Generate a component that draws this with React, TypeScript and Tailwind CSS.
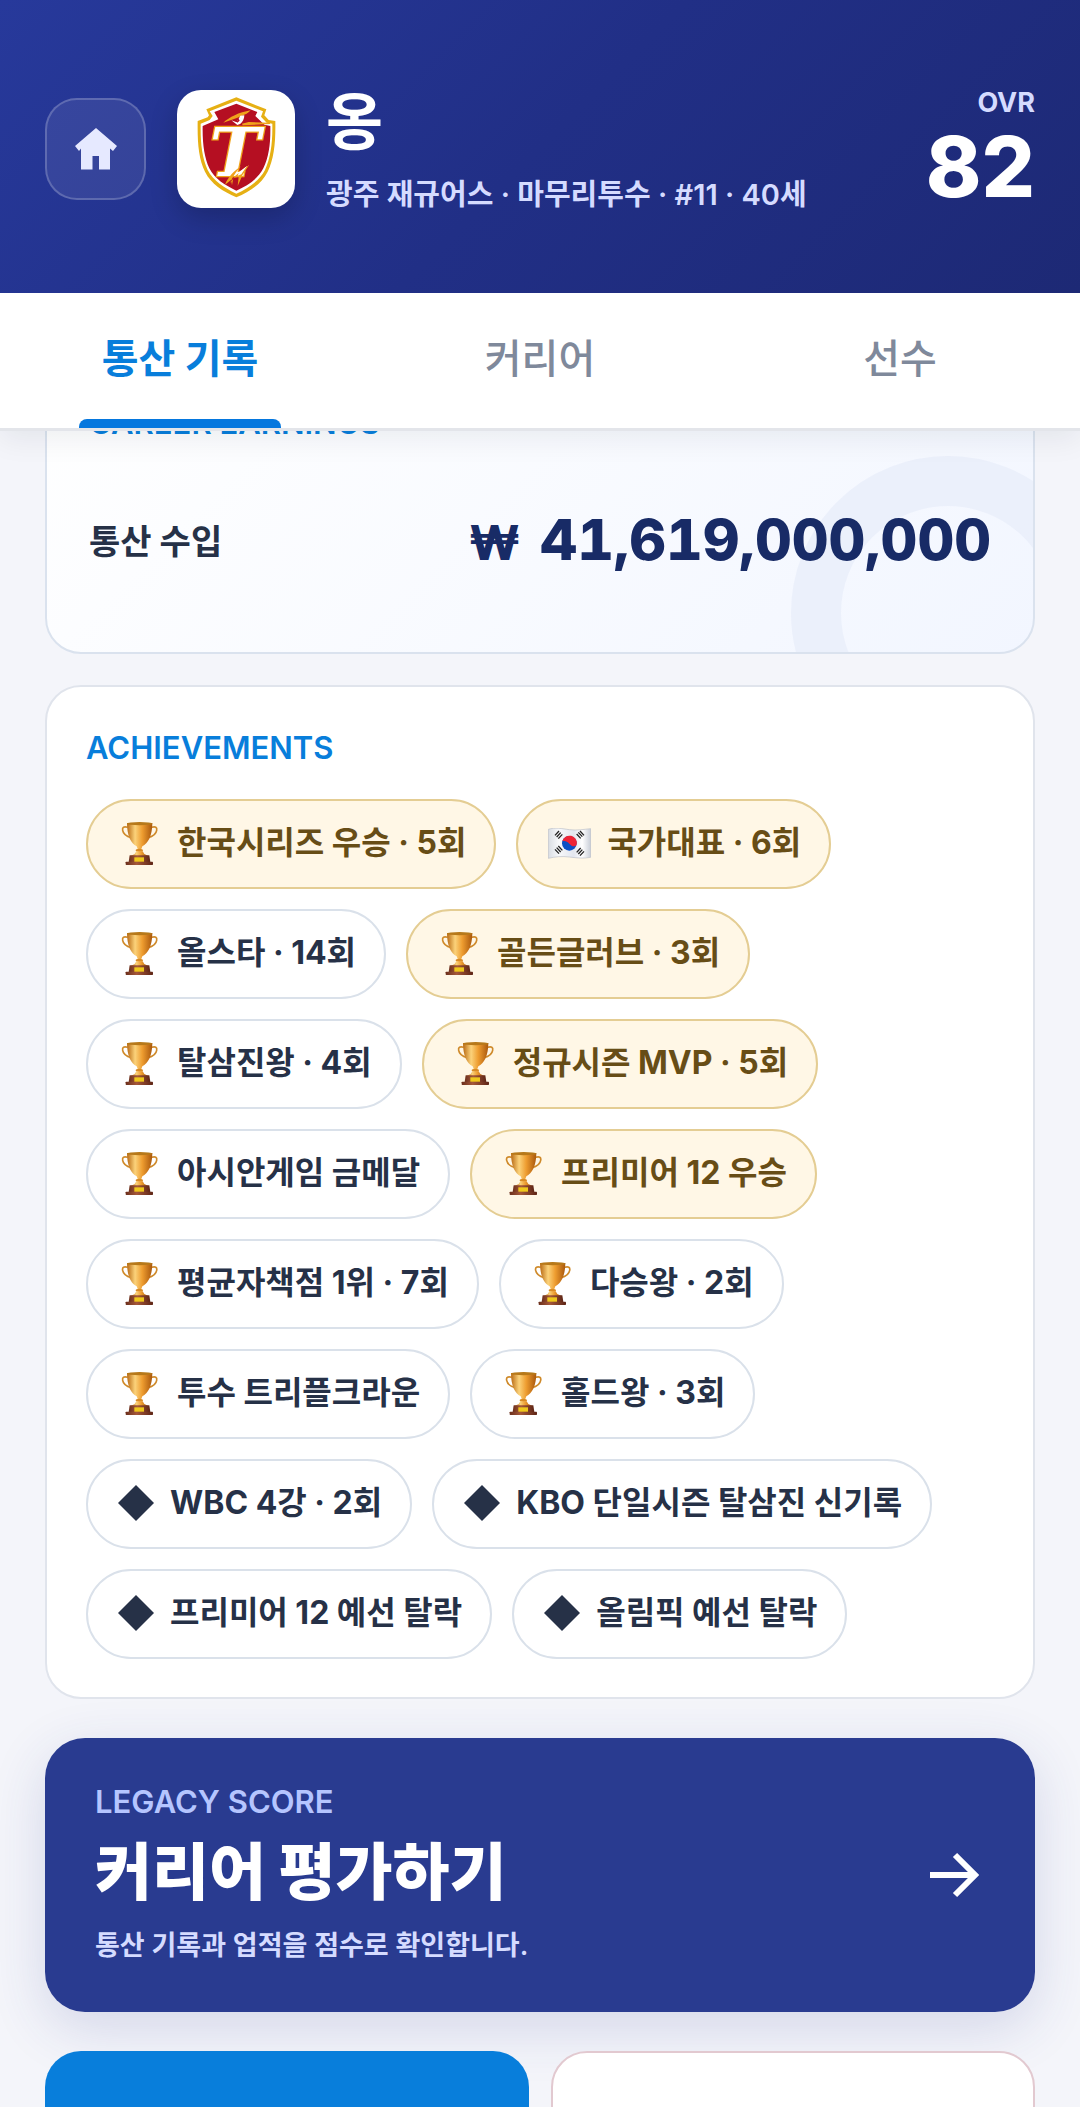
type IconName = 'trophy' | 'flag' | 'diamond';

interface Achievement {
  label: string;
  icon: IconName;
  gold?: boolean;
}

const achievements: Achievement[] = [
  { label: '한국시리즈 우승 · 5회', icon: 'trophy', gold: true },
  { label: '국가대표 · 6회', icon: 'flag', gold: true },
  { label: '올스타 · 14회', icon: 'trophy' },
  { label: '골든글러브 · 3회', icon: 'trophy', gold: true },
  { label: '탈삼진왕 · 4회', icon: 'trophy' },
  { label: '정규시즌 MVP · 5회', icon: 'trophy', gold: true },
  { label: '아시안게임 금메달', icon: 'trophy' },
  { label: '프리미어 12 우승', icon: 'trophy', gold: true },
  { label: '평균자책점 1위 · 7회', icon: 'trophy' },
  { label: '다승왕 · 2회', icon: 'trophy' },
  { label: '투수 트리플크라운', icon: 'trophy' },
  { label: '홀드왕 · 3회', icon: 'trophy' },
  { label: 'WBC 4강 · 2회', icon: 'diamond' },
  { label: 'KBO 단일시즌 탈삼진 신기록', icon: 'diamond' },
  { label: '프리미어 12 예선 탈락', icon: 'diamond' },
  { label: '올림픽 예선 탈락', icon: 'diamond' },
];

const tabs = ['통산 기록', '커리어', '선수'];

function HomeIcon() {
  return (
    <svg viewBox="0 0 42 42" className="size-[42px]" fill="#e6e9ff" aria-hidden="true">
      <path d="M21 0 42 18 38 23 35 20.5V41.5H24V28H17.5V41.5H6V20.5L4 23 0 18Z" />
    </svg>
  );
}

function TeamLogo() {
  return (
    <svg viewBox="21 30 354 354" className="size-full" aria-hidden="true">
      <path
        d="M199 52 289 88 283 106 296 120 316 123C317 190 312 236 293 275 275 312 239 334 199 352 159 334 123 312 105 275 86 236 82 190 83 123L113 112 117 106 109 88Z"
        fill="#e6b014"
      />
      <path
        d="M199 62 279 94 273 110 290 128 307 131C308 190 302 232 285 270 268 303 235 324 199 341 163 324 130 303 113 270 96 232 91 190 92 131L119 120 128 108 119 94Z"
        fill="#fff"
      />
      <path
        d="M199 71 262 96 256 108 283 134 301 138C302 190 297 230 280 265 264 297 233 316 199 332 165 316 134 297 118 265 103 232 97 190 98 138L145 118 133 96Z"
        fill="#b50f22"
      />
      <path d="M160 128 C178 112 206 97 242 91 230 106 200 114 160 128ZM216 131 236 126 300 128 300 132 218 136Z" fill="#f0a31b" />
      <path d="M184 121 200 127 211 107 223 106C222 122 214 133 202 135Z" fill="#fff" />
      <path d="M196 120 202 123 206 115 209 122 202 128Z" fill="#b50f22" />
      <text
        x="195"
        y="289"
        textAnchor="middle"
        fill="#fff"
        stroke="#f0a31b"
        strokeWidth="8"
        paintOrder="stroke"
        className="font-['DejaVu_Serif',serif] text-[204px] font-bold italic"
      >
        T
      </text>
      <path d="M196 289 232 257 214 290Z" fill="#fff" />
      <path
        d="M165 314C174 292 192 272 213 259 196 276 186 296 180 310L196 287 238 254 218 284 203 318 206 290 190 294 186 316 183 300Z"
        fill="#f0a31b"
      />
      <path d="M207 276 230 259 214 283 203 287Z" fill="#fff" />
    </svg>
  );
}

function TrophyIcon() {
  return (
    <svg viewBox="235 453 129 129" className="size-[43px]" aria-hidden="true">
      <defs>
        <linearGradient id="cup" x1="0" x2="1">
          <stop offset="0" stopColor="#b96a14" />
          <stop offset="0.32" stopColor="#fbd27a" />
          <stop offset="0.6" stopColor="#ee9d30" />
          <stop offset="1" stopColor="#a9570c" />
        </linearGradient>
        <linearGradient id="base" x1="0" x2="1">
          <stop offset="0" stopColor="#6b2f1c" />
          <stop offset="0.4" stopColor="#a5583a" />
          <stop offset="1" stopColor="#5d2415" />
        </linearGradient>
      </defs>
      <path
        d="M264 469C253 465 247 469 249 478 251 491 260 496 275 500M336 469C347 465 353 469 351 478 349 491 340 496 325 500"
        fill="none"
        stroke="#cf8a2a"
        strokeWidth="5"
      />
      <path d="M262 456H338C338 494 325 518 308 526L304 536H295L291 526C274 518 262 494 262 456Z" fill="url(#cup)" />
      <ellipse cx="300" cy="458" rx="38" ry="5" fill="#b7791a" />
      <ellipse cx="299" cy="538" rx="11" ry="5" fill="#d98b25" />
      <path d="M290 541H309L314 549 326 555H273L285 549Z" fill="url(#cup)" />
      <path d="M270 553H329L332 573H267Z" fill="url(#base)" />
      <rect x="258" y="572" width="82" height="10" rx="2" fill="url(#base)" />
      <rect x="284" y="559" width="29" height="13" fill="#efc81c" />
    </svg>
  );
}

function FlagIcon() {
  return (
    <svg viewBox="0 0 129 93" className="h-[31px] w-[43px]" aria-hidden="true">
      <defs>
        <linearGradient id="cloth" x1="0" x2="1">
          <stop offset="0" stopColor="#d9dde3" />
          <stop offset="0.25" stopColor="#f8f9fb" />
          <stop offset="0.6" stopColor="#e3e6ee" />
          <stop offset="0.8" stopColor="#ffffff" />
          <stop offset="1" stopColor="#c9ced8" />
        </linearGradient>
      </defs>
      <path d="M1 4C22 -3 42 2 64 5 88 8 107 4 128 2V88C107 92 88 90 64 87 42 84 22 86 1 91Z" fill="url(#cloth)" stroke="#b9bec8" strokeWidth="2" />
      <circle cx="64" cy="46" r="22" fill="#0b4fc4" />
      <path d="M43 40A22 22 0 0 1 86 50C80 58 71 55 64 47 57 39 49 37 43 40Z" fill="#ee2436" />
      <g stroke="#222" strokeWidth="4">
        <path d="M21 22 33 9M26 27 38 14M31 32 43 19" />
        <path d="M86 18 98 31M91 13 103 26M96 9 108 22" />
        <path d="M21 64 33 77M26 59 38 72M31 54 43 67" />
        <path d="M86 73 98 60M91 78 103 65M96 83 108 70" />
      </g>
    </svg>
  );
}

function DiamondIcon() {
  return (
    <svg viewBox="0 0 36 36" className="size-9" fill="#263147" aria-hidden="true">
      <path d="M18 0 36 18 18 36 0 18Z" />
    </svg>
  );
}

const icons = { trophy: TrophyIcon, flag: FlagIcon, diamond: DiamondIcon };

function AchievementPill({ label, icon, gold }: Achievement) {
  const Icon = icons[icon];
  return (
    <li
      className={`flex h-[90px] items-center gap-4 rounded-full border-2 pr-7 pb-0.5 pl-[30px] text-[32px] leading-10 font-bold ${
        gold ? 'border-[#e4cd93] bg-[#fff7e6] text-[#674d16]' : 'border-[#dae1ea] bg-white text-[#263147]'
      }`}
    >
      <Icon />
      <span className="whitespace-nowrap">{label}</span>
    </li>
  );
}

export default function App() {
  return (
    <div className="h-screen overflow-hidden bg-[#f4f5fa] font-['Inter','Noto_Sans_CJK_KR',sans-serif]">
      <div className="relative z-10 shadow-[0_8px_28px_rgba(15,23,42,0.07)]">
        <header className="flex items-center gap-[31px] bg-linear-[135deg] from-[#27399b] via-[#212f86] to-[#1d2975] px-[45px] pt-[81px] pb-[76px]">
          <button
            aria-label="홈"
            className="flex h-[102px] w-[101px] shrink-0 items-center justify-center rounded-[32px] border-2 border-white/20 bg-white/8"
          >
            <HomeIcon />
          </button>
          <div className="size-[118px] shrink-0 overflow-hidden rounded-3xl bg-white shadow-[0_10px_28px_rgba(0,0,0,0.2)]">
            <TeamLogo />
          </div>
          <div className="min-w-0 flex-1">
            <h1 className="text-[62px] leading-[84px] font-bold text-white">옹</h1>
            <p className="mt-2 text-[29px] leading-[44px] font-semibold text-[#d5dbff]">
              광주 재규어스 · 마무리투수 · #11 · 40세
            </p>
          </div>
          <div className="text-right">
            <p className="text-[27px] leading-8 font-bold text-[#d5dbff]">OVR</p>
            <p className="mt-1 text-[84px] leading-[88px] font-extrabold text-white">82</p>
          </div>
        </header>

        <nav className="grid grid-cols-3 border-b-3 border-[#e3e5ea] bg-white">
          {tabs.map((tab, i) => (
            <button
              key={tab}
              className={`relative h-[135px] pb-1 text-[40px] ${
                i === 0 ? 'font-bold text-[#087edb]' : 'font-medium text-[#7f899b]'
              }`}
            >
              {tab}
              {i === 0 && <span className="absolute inset-x-[22%] bottom-0 h-[9px] rounded-t-lg bg-[#0577de]" />}
            </button>
          ))}
        </nav>
      </div>

      <main className="-mt-[70px] flex flex-col px-[45px]">
        <section className="relative overflow-hidden rounded-[36px] border-2 border-[#dae2ee] bg-linear-[135deg] from-white to-[#f2f6ff] px-[42px] pt-[42px] pb-[73px]">
          <div className="absolute -right-[72px] -bottom-[118px] size-[314px] rounded-full border-[50px] border-[#e9edfa]/80" />
          <h2 className="relative text-[31px] leading-9 font-semibold text-[#087edb]">CAREER EARNINGS</h2>
          <div className="relative mt-[63px] flex items-center justify-between leading-[72px]">
            <span className="text-[34px] font-bold text-[#263147]">통산 수입</span>
            <strong className="flex items-baseline gap-5 text-[57px] font-extrabold text-[#182b66] tabular-nums">
              <span className="text-[48px]">₩</span>
              <span>41,619,000,000</span>
            </strong>
          </div>
        </section>

        <section className="mt-[31px] rounded-[36px] border-2 border-[#e0e4ec] bg-white px-[39px] pt-[43px] pb-[38px]">
          <h2 className="text-[31px] leading-9 font-semibold text-[#087edb]">ACHIEVEMENTS</h2>
          <ul className="mt-[33px] flex flex-wrap gap-5">
            {achievements.map((item) => (
              <AchievementPill key={item.label} {...item} />
            ))}
          </ul>
        </section>

        <button className="mt-[39px] flex items-center justify-between rounded-[40px] bg-[#293b90] px-[50px] py-[46px] text-left shadow-[0_16px_56px_rgba(41,59,144,0.16)]">
          <span className="flex flex-col">
            <span className="text-[31px] leading-9 font-semibold text-[#b5c5ff]">LEGACY SCORE</span>
            <span className="mt-3 text-[62px] leading-[82px] font-black text-white">커리어 평가하기</span>
            <span className="mt-3 text-[27px] leading-10 font-semibold text-[#d5dbff]">
              통산 기록과 업적을 점수로 확인합니다.
            </span>
          </span>
          <svg viewBox="0 0 49 46" className="mr-1.5 h-[46px] w-[49px]" fill="none" stroke="white" strokeWidth="6" aria-hidden="true">
            <path d="M0 23H44M25 3 45 23 25 43" />
          </svg>
        </button>

        <div className="mt-[39px] grid grid-cols-2 gap-[22px]">
          <button aria-label="공유" className="h-[146px] rounded-[36px] bg-[#087edb]" />
          <button aria-label="삭제" className="h-[146px] rounded-[36px] border-2 border-[#e2c9d0] bg-white" />
        </div>
      </main>
    </div>
  );
}
